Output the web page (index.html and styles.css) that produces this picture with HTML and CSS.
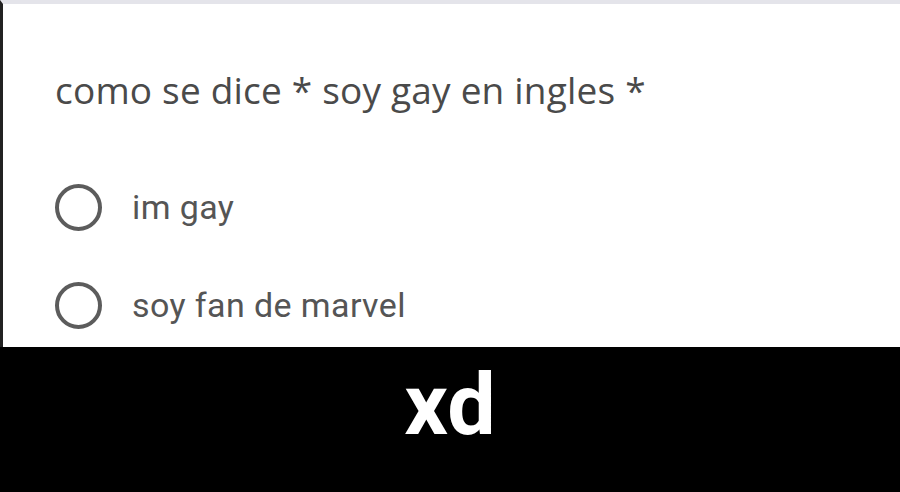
FILE: index.html
```html
<!DOCTYPE html>
<html lang="es">
<head>
  <meta charset="UTF-8">
  <title>como se dice</title>
  <link rel="stylesheet" href="styles.css">
</head>
<body>
  <div class="form-card">
    <div class="question">como se dice * soy gay en ingles *</div>
    <div class="options">
      <label class="option"><span class="radio"></span><span class="option-text">im gay</span></label>
      <label class="option"><span class="radio"></span><span class="option-text">soy fan de marvel</span></label>
    </div>
  </div>
  <div class="caption">xd</div>
</body>
</html>
```

FILE: styles.css
```css
* {
  margin: 0;
  padding: 0;
  box-sizing: border-box;
}

body {
  width: 900px;
  height: 492px;
  overflow: hidden;
  background: #000;
}

.form-card {
  height: 347px;
  background: #fff;
  border-left: 3px solid #222;
  border-top: 4px solid #e4e4ea;
  padding: 62px 0 0 52px;
  overflow: hidden;
}

.question {
  font-family: 'Open Sans', sans-serif;
  font-size: 37px;
  line-height: 48px;
  letter-spacing: 0.2px;
  color: #4a4a4a;
}

.options {
  display: flex;
  flex-direction: column;
  gap: 50px;
  margin-top: 69px;
}

.option {
  display: flex;
  align-items: center;
  gap: 30px;
  height: 48px;
}

.radio {
  width: 47px;
  height: 47px;
  border: 4px solid #5c5c5c;
  border-radius: 50%;
}

.option-text {
  font-family: Roboto, sans-serif;
  font-size: 34px;
  letter-spacing: 0.4px;
  color: #555;
}

.caption {
  height: 145px;
  display: flex;
  justify-content: center;
  align-items: center;
  font-family: Roboto, sans-serif;
  font-weight: 700;
  font-size: 86px;
  color: #fff;
  padding-bottom: 30px;
}
```
